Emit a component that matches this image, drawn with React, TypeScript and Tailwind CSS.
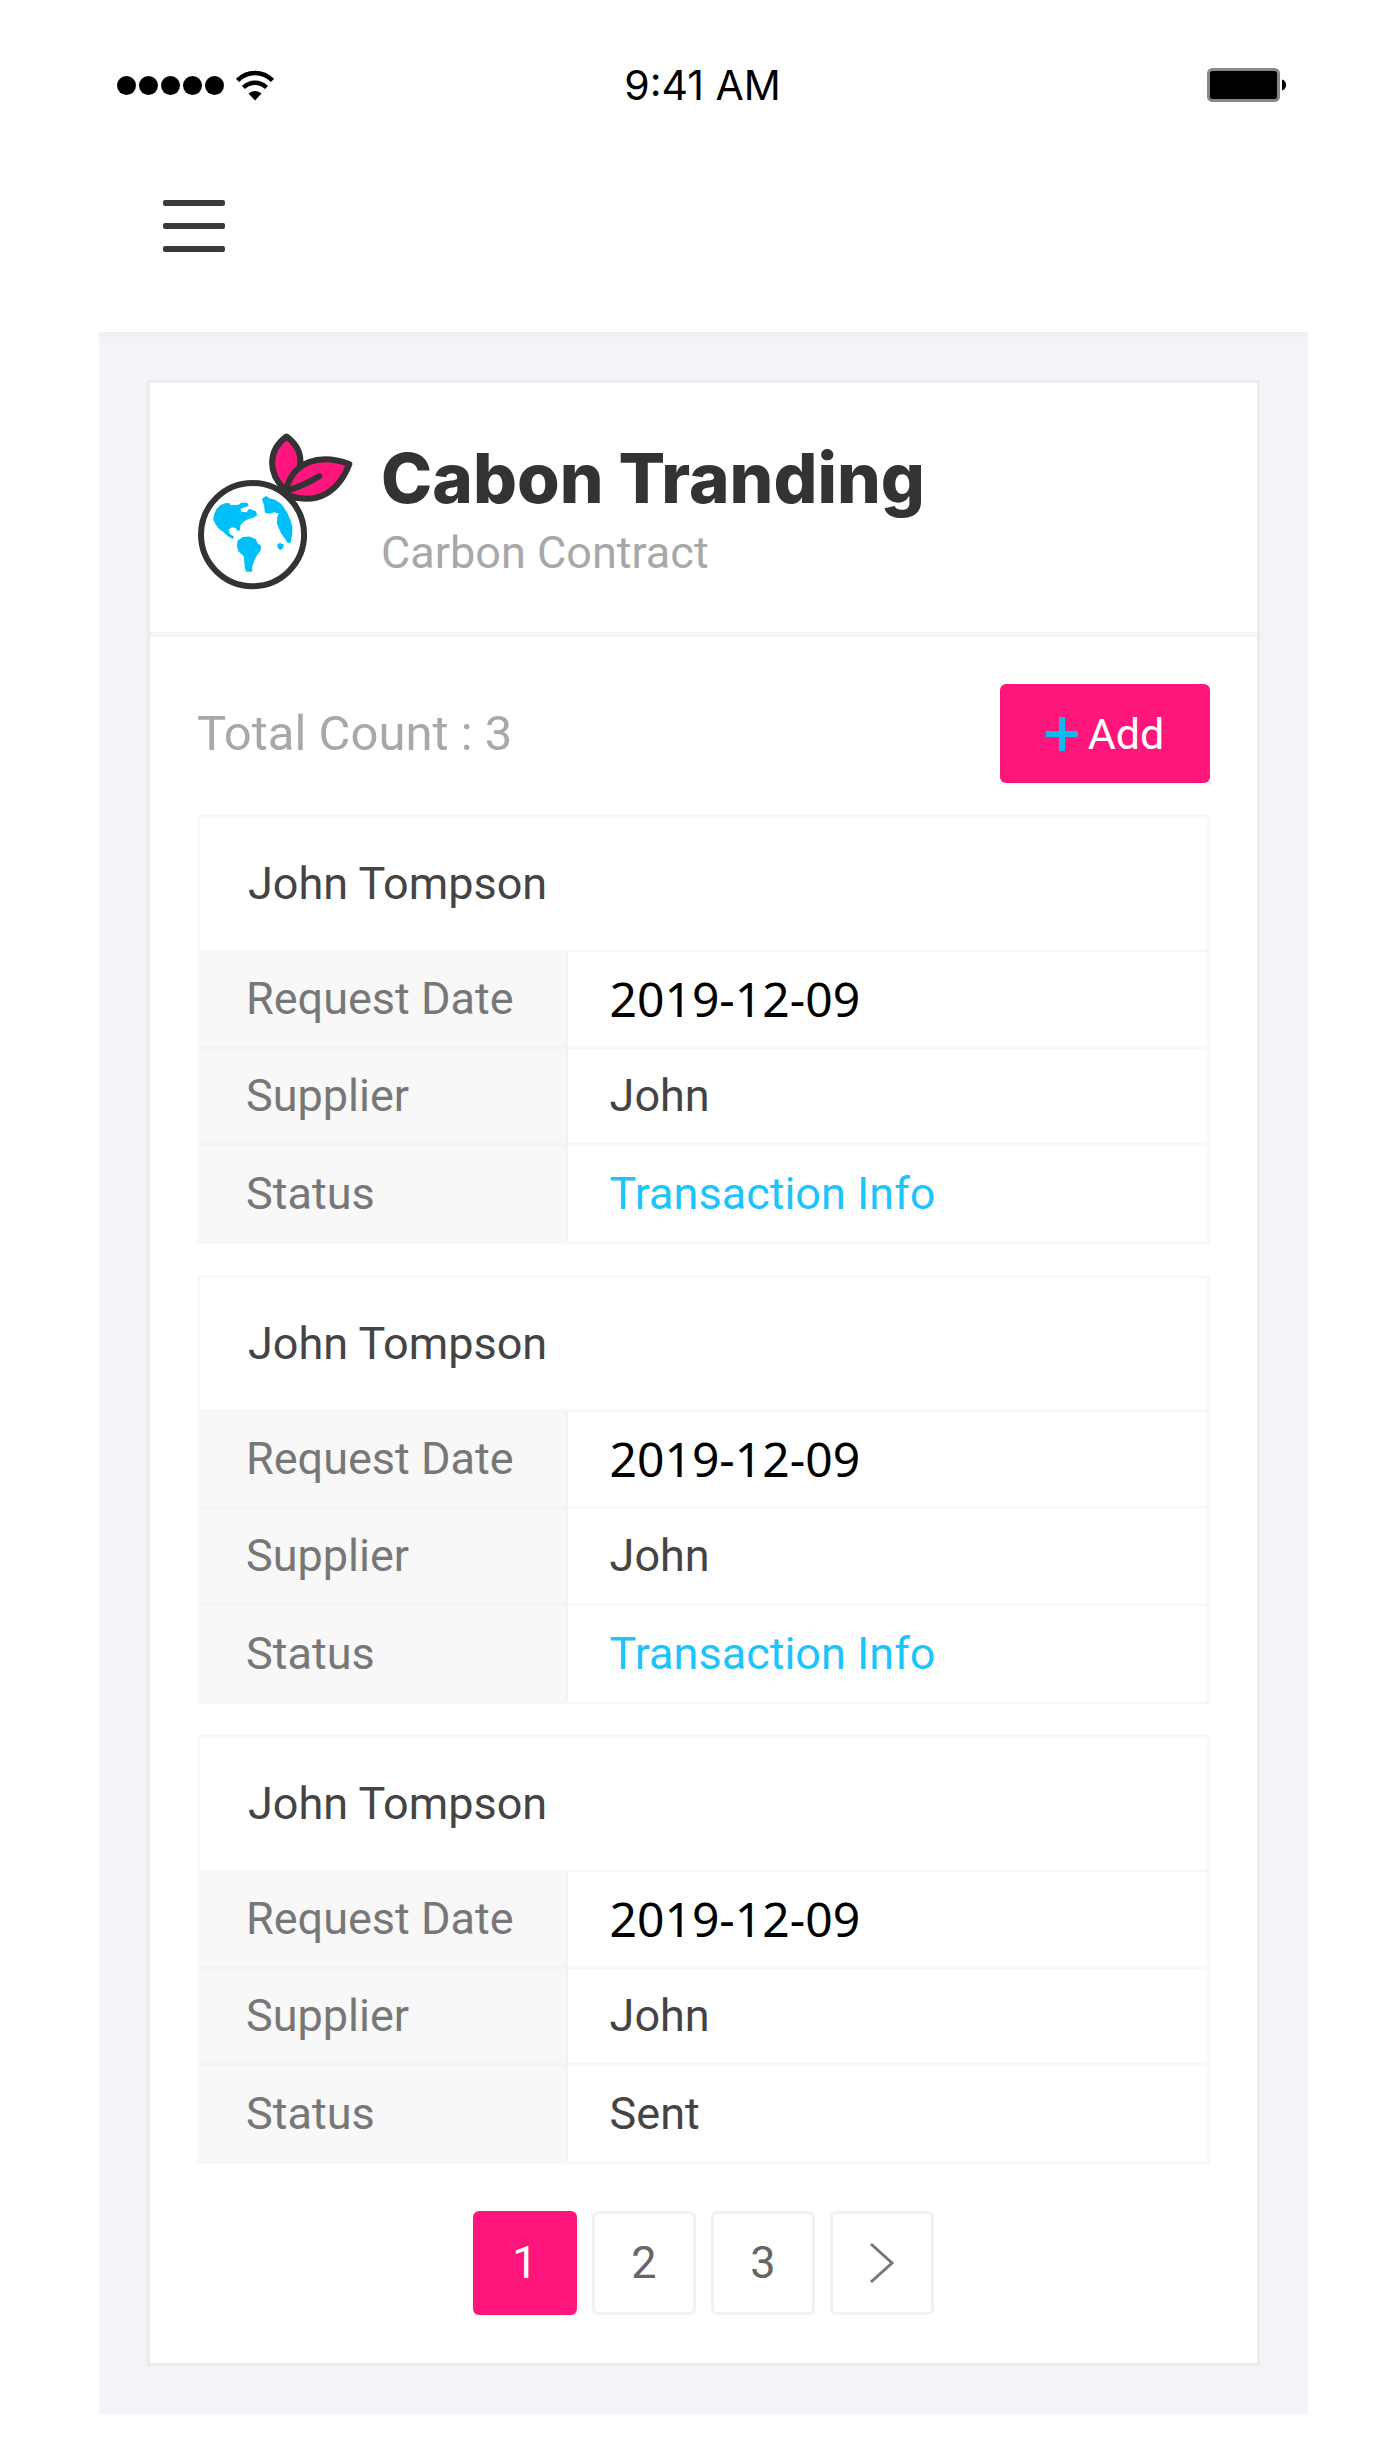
import React from "react";

type Contract = { name: string; date: string; supplier: string; status: string; link?: boolean };

const contracts: Contract[] = [
  { name: "John Tompson", date: "2019-12-09", supplier: "John", status: "Transaction Info", link: true },
  { name: "John Tompson", date: "2019-12-09", supplier: "John", status: "Transaction Info", link: true },
  { name: "John Tompson", date: "2019-12-09", supplier: "John", status: "Sent" },
];

function StatusBar() {
  return (
    <div className="grid h-[170px] grid-cols-3 items-center pl-[18px] pr-[20px]">
      <div className="flex items-center gap-3" aria-label="Signal">
        <div className="flex gap-[3px]">
          {[0, 1, 2, 3, 4].map((i) => (
            <span key={i} className="size-[19px] rounded-full bg-black" />
          ))}
        </div>
        <svg width="38" height="31" viewBox="0 0 38 31" fill="none" stroke="#000" strokeWidth="4.500" aria-hidden="true">
          <path d="M1.500 10.500C11 .5 27 .5 36.500 10.500" />
          <path d="M7.500 17.500C14 11 24 11 30.500 17.500" />
          <path d="M12.500 23.500C16 20 22 20 25.500 23.500L19 30.500Z" fill="#000" stroke="none" />
        </svg>
      </div>
      <div className="text-center font-['Inter'] text-[41px] leading-[48px] text-black">9:41 AM</div>
      <svg className="justify-self-end" width="81" height="34" viewBox="0 0 81 34" aria-label="Battery">
        <rect x="1.500" y="1.500" width="70" height="31" rx="4" fill="#000" stroke="#888" strokeWidth="3" />
        <path d="M75 11.500C80.500 13 80.500 21 75 22.500Z" fill="#000" />
      </svg>
    </div>
  );
}

function Logo() {
  return (
    <svg width="155" height="158" viewBox="38 36 466 474" className="shrink-0" aria-hidden="true">
      <g fill="#ff167c" stroke="#333" strokeWidth="18" strokeLinejoin="round" strokeLinecap="round">
        <path d="M297 206C251 162 244 94 304 49C365 94 354 162 306 206Z" />
        <path d="M303 208C325 124 402 99 493 132C462 212 399 257 312 227Z" />
        <path d="M306 211C340 202 370 188 403 168" fill="none" />
      </g>
      <circle cx="202" cy="344" r="155" fill="#fff" stroke="#333" strokeWidth="18" />
      <path d="M278 188L300 200L340 240L318 246L284 214Z" fill="#333" />
      <g fill="#00bff9">
        <path d="M119 250L130 248L137 256L160 254L168 248H186L191 258L178 262L166 266L168 275L184 277L192 266L212 274L216 286L202 294L190 297L177 304L166 315L164 330L158 334L151 324L140 322L130 329L134 343L146 350L143 357L128 349L116 338L101 326L92 315L84 300L86 284L93 268L105 256Z" />
        <path d="M173 351L193 350L212 358L217 369L228 379L225 394L214 408L208 421L201 440V456H182L178 440L176 410L160 395L155 380L157 362Z" />
        <path d="M230 236L243 228L252 235L270 239L285 249L296 262L307 280L315 298L322 321L321 345L317 368L308 369L298 354L288 341L282 327L275 310L276 292L281 281L267 277L254 281L239 278L237 258Z" />
        <path d="M276 374L284 369L296 374L294 384L285 391L277 382Z" />
      </g>
    </svg>
  );
}

function ContractTable({ c }: { c: Contract }) {
  const label = "border-r-3 border-[#f3f3f3] bg-[#f8f8f8] pl-[46px] text-left font-normal text-[#777]";
  return (
    <table className="w-full table-fixed border-separate border-spacing-0 border-3 border-[#f8f8f8] text-[45px] leading-[52px] text-[#444]">
      <colgroup>
        <col className="w-[36.5%]" />
        <col />
      </colgroup>
      <thead>
        <tr className="h-[134px]">
          <th scope="col" colSpan={2} className="border-b-3 border-[#f8f8f8] pl-12 text-left font-normal">
            {c.name}
          </th>
        </tr>
      </thead>
      <tbody>
        <tr className="h-[97px]">
          <th scope="row" className={`border-b-3 ${label}`}>Request Date</th>
          <td className="border-b-3 border-[#f8f8f8] pl-[42px] font-['Noto_Sans'] text-[48px] text-black">{c.date}</td>
        </tr>
        <tr className="h-[97px]">
          <th scope="row" className={`border-b-3 ${label}`}>Supplier</th>
          <td className="border-b-3 border-[#f8f8f8] pl-[42px]">{c.supplier}</td>
        </tr>
        <tr className="h-[95px]">
          <th scope="row" className={label}>Status</th>
          <td className="pl-[42px]">
            {c.link ? <a href="#transaction" className="text-[#1cc4fb]">{c.status}</a> : c.status}
          </td>
        </tr>
      </tbody>
    </table>
  );
}

export default function App() {
  const page = "flex h-[104px] w-[104px] items-center justify-center rounded-md text-[45px] leading-[52px]";
  return (
    <div className="bg-white pb-12 pl-[99px] pr-[67px] font-['Roboto',sans-serif]">
      <header>
        <StatusBar />
        <div className="h-[162px] px-16 pt-[30px]">
          <button type="button" aria-label="Menu" className="flex w-[62px] flex-col gap-[17px]">
            <span className="h-[6px] w-full rounded-xs bg-[#3a3a3a]" />
            <span className="h-[6px] w-full rounded-xs bg-[#3a3a3a]" />
            <span className="h-[6px] w-full rounded-xs bg-[#3a3a3a]" />
          </button>
        </div>
      </header>

      <main className="border-t-5 border-[#f0f0f2] bg-[#f3f4f9] px-12 pb-12 pt-[43px]">
        <section className="border-3 border-[#ebebeb] bg-white">
          <div className="flex gap-7 border-b-5 border-[#f4f4f4] px-12 pb-[42px] pt-[49px]">
            <Logo />
            <div>
              <h1 className="mt-2 font-['Inter'] text-[69px] font-extrabold leading-[76px] text-[#333]">Cabon Tranding</h1>
              <p className="text-[45px] leading-[74px] text-[#a8a8a8]">Carbon Contract</p>
            </div>
          </div>

          <div className="px-[47px] pb-12 pt-[47px]">
            <div className="mb-8 flex items-center justify-between">
              <p className="text-[49px] leading-[60px] text-[#a8a8a8]">Total Count : 3</p>
              <button
                type="button"
                className="flex h-[99px] w-[210px] items-center justify-center gap-[10px] rounded-md bg-[#ff167c] text-[43px] leading-[52px] text-white"
              >
                <svg width="32" height="34" viewBox="0 0 32 34" stroke="#0fb8f0" strokeWidth="6" aria-hidden="true">
                  <path d="M16 0V34M0 17H32" />
                </svg>
                Add
              </button>
            </div>

            <div className="flex flex-col gap-[31px]">
              {contracts.map((c, i) => (
                <ContractTable key={i} c={c} />
              ))}
            </div>

            <nav aria-label="Pagination" className="mt-[47px] flex justify-center gap-[15px]">
              <button type="button" aria-current="page" className={`bg-[#ff167c] text-white ${page}`}>1</button>
              <button type="button" className={`border-3 border-[#f2f2f2] text-[#666] ${page}`}>2</button>
              <button type="button" className={`border-3 border-[#f2f2f2] text-[#666] ${page}`}>3</button>
              <button type="button" aria-label="Next page" className={`border-3 border-[#f2f2f2] text-[#666] ${page}`}>
                <svg width="26" height="42" viewBox="0 0 26 42" fill="none" stroke="#777" strokeWidth="3" aria-hidden="true">
                  <path d="M2 2L23 21L2 40" />
                </svg>
              </button>
            </nav>
          </div>
        </section>
      </main>
    </div>
  );
}
